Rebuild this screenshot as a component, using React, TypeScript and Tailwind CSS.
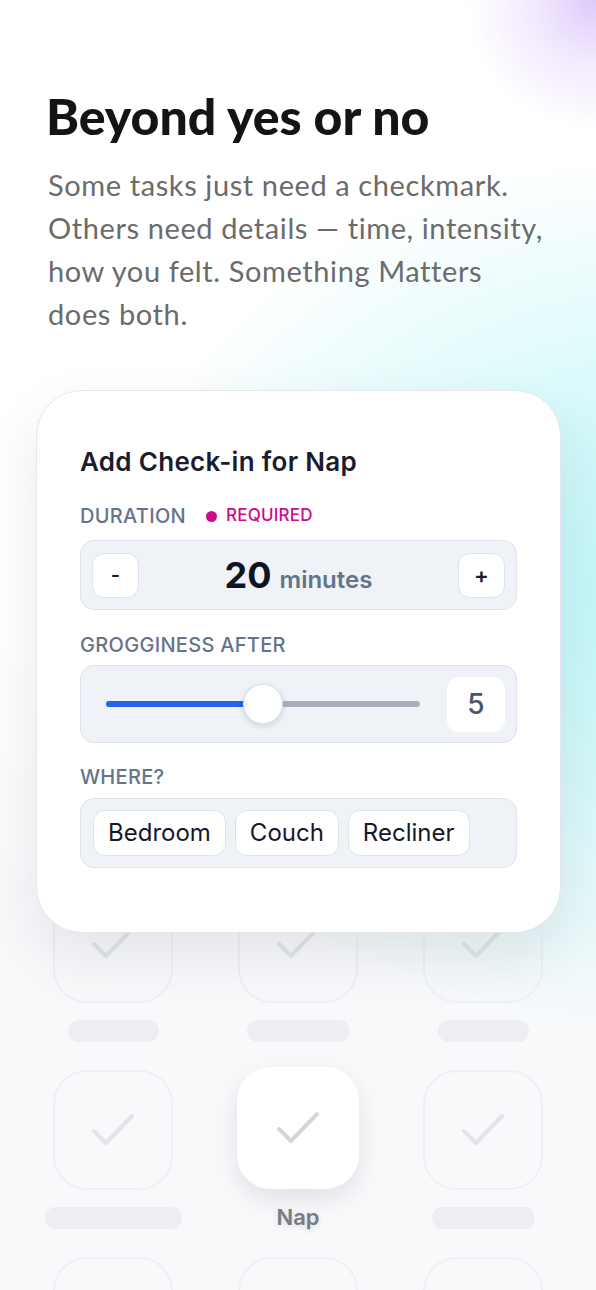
import React from "react";

const sans = "font-['Inter','Noto_Sans',sans-serif]";

function Check({ color, size = 48 }: { color: string; size?: number }) {
  return (
    <svg width={size} height={size} viewBox="0 0 48 48" fill="none">
      <path
        d="M5 25 L17 37 L43 10"
        stroke={color}
        strokeWidth="4"
        strokeLinecap="round"
        strokeLinejoin="round"
      />
    </svg>
  );
}

function GhostTile() {
  return (
    <div className="w-[120px] h-[120px] rounded-[34px] border-2 border-[#eef0f4] flex items-center justify-center">
      <Check color="#e2e4e9" />
    </div>
  );
}

function Cell({ bar, label, active }: { bar?: string; label?: string; active?: boolean }) {
  return (
    <div className="flex flex-col items-center h-[187px]">
      {active ? (
        <div className="w-[122px] h-[122px] -mt-[3px] rounded-[34px] bg-white shadow-[0_10px_24px_rgba(15,23,42,0.10)] flex items-center justify-center">
          <Check color="#d4d6dc" />
        </div>
      ) : (
        <GhostTile />
      )}
      {label ? (
        <div className={`mt-[16px] h-[24px] leading-[24px] text-[22px] font-semibold text-[#777a84] ${sans} [text-shadow:0_2px_6px_rgba(0,0,0,0.12)]`}>
          {label}
        </div>
      ) : (
        <div className={`mt-[17px] h-[22px] rounded-full bg-[#eceef2] ${bar}`} />
      )}
    </div>
  );
}

export default function App() {
  return (
    <div className="relative w-[596px] h-[1290px] overflow-hidden bg-[radial-gradient(circle_at_100%_0%,rgba(220,200,251,0.95)_0px,rgba(230,214,252,0.55)_60px,rgba(240,230,253,0)_130px),radial-gradient(ellipse_560px_440px_at_112%_46%,rgba(190,246,248,1)_0%,rgba(196,247,249,0.75)_40%,rgba(210,248,250,0)_100%),linear-gradient(180deg,#ffffff_0%,#ffffff_50%,#f8f9fb_72%,#f8f9fb_100%)]">
      {/* Intro copy */}
      <div className="pl-[46px] pr-[20px] pt-[86px]">
        <h1 className="font-['Lato',sans-serif] font-black text-[50px] leading-[60px] tracking-[0px] text-[#141414]">
          Beyond yes or no
        </h1>
        <p className="mt-[17px] pl-[2px] font-['Lato',sans-serif] text-[29px] leading-[43px] text-[#6b6b6b] tracking-[0.6px]">
          Some tasks just need a checkmark.
          <br />
          Others need details — time, intensity,
          <br />
          how you felt. Something Matters
          <br />
          does both.
        </p>
      </div>

      {/* Check-in sheet */}
      <div className={`relative z-10 ml-[36px] mt-[55px] w-[525px] rounded-[46px] bg-white border border-[#e4e6ec] shadow-[0_24px_60px_rgba(15,23,42,0.09)] px-[43px] pt-[55px] pb-[64px] ${sans}`}>
        <h2 className="text-[26px] leading-[32px] font-semibold text-[#1b1c2e] tracking-[0.3px]">
          Add Check-in for Nap
        </h2>

        <div className="mt-[26px] flex items-center h-[24px]">
          <span className="text-[20px] font-medium text-[#64748b] tracking-[0.3px]">DURATION</span>
          <span className="ml-[20px] w-[11px] h-[11px] rounded-full bg-[#cd0a8c]" />
          <span className="ml-[9px] text-[17px] font-medium text-[#cd0a8c] tracking-[0.2px]">REQUIRED</span>
        </div>

        <div className="mt-[12px] h-[70px] rounded-[14px] bg-[#eff3f8] border border-[#dce3ec] flex items-center justify-between px-[11px]">
          <div className="w-[47px] h-[45px] rounded-[12px] bg-white border border-[#dce3ec] flex items-center justify-center text-[20px] font-semibold text-[#1b1c2e]">
            -
          </div>
          <div className="flex items-baseline gap-[8px]">
            <span className="text-[36px] font-bold text-[#111322]">20</span>
            <span className="text-[24px] font-semibold text-[#64748b]">minutes</span>
          </div>
          <div className="w-[47px] h-[45px] rounded-[12px] bg-white border border-[#dce3ec] flex items-center justify-center text-[22px] font-semibold text-[#1b1c2e]">
            +
          </div>
        </div>

        <div className="mt-[23px] h-[24px] leading-[24px] text-[20px] font-medium text-[#64748b] tracking-[0.3px]">
          GROGGINESS AFTER
        </div>

        <div className="mt-[8px] h-[78px] rounded-[14px] bg-[#eff3f8] border border-[#dce3ec] flex items-center pl-[25px] pr-[11px]">
          <div className="relative w-[314px] h-[6px] rounded-full bg-[#a8b0be]">
            <div className="absolute left-0 top-0 h-[6px] w-[150px] rounded-full bg-[#2563eb]" />
            <div className="absolute left-[137px] top-[-17px] w-[40px] h-[40px] rounded-full bg-white border border-[#dce3ec] shadow-[0_2px_6px_rgba(15,23,42,0.15)]" />
          </div>
          <div className="ml-auto w-[58px] h-[55px] rounded-[12px] bg-white flex items-center justify-center text-[28px] font-medium text-[#475569]">
            5
          </div>
        </div>

        <div className="mt-[22px] h-[24px] leading-[24px] text-[20px] font-medium text-[#64748b] tracking-[0.3px]">
          WHERE?
        </div>

        <div className="mt-[9px] h-[70px] rounded-[14px] bg-[#eff3f8] border border-[#dce3ec] flex items-center gap-[9px] px-[12px]">
          {["Bedroom", "Couch", "Recliner"].map((c) => (
            <div
              key={c}
              className="h-[46px] px-[14px] rounded-[12px] bg-white border border-[#dce3ec] flex items-center text-[24px] text-[#16172a]"
            >
              {c}
            </div>
          ))}
        </div>
      </div>

      {/* Task grid behind the sheet */}
      <div className="-mt-[50px] grid grid-cols-[120px_120px_120px] gap-x-[65px] justify-center">
        <Cell bar="w-[91px]" />
        <Cell bar="w-[103px]" />
        <Cell bar="w-[91px]" />
        <Cell bar="w-[137px]" />
        <Cell label="Nap" active />
        <Cell bar="w-[103px]" />
        <Cell bar="w-[91px]" />
        <Cell bar="w-[103px]" />
        <Cell bar="w-[91px]" />
      </div>
    </div>
  );
}
